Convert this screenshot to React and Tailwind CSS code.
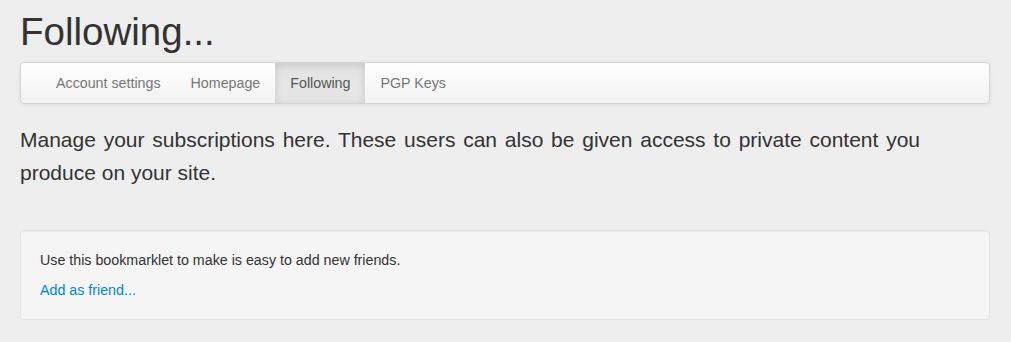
import React from 'react';

const tabs = ['Account settings', 'Homepage', 'Following', 'PGP Keys'];

export default function App() {
  return (
    <div className="min-h-[342px] bg-[#eeeeee] pl-5 pr-[21px] pt-[2px] text-[14.25px] leading-5 text-[#333333] font-['Liberation_Sans',Arial,sans-serif]">
      <h1 className="my-[10px] text-[38.5px] leading-10 font-normal">Following...</h1>

      {/* Tabs bar */}
      <div className="mb-5 min-h-10 rounded border border-[#d4d4d4] bg-gradient-to-b from-white to-[#f2f2f2] px-5 shadow-[0_1px_4px_rgba(0,0,0,0.065)]">
        <ul className="flex">
          {tabs.map((t) => (
            <li key={t}>
              <a
                className={
                  t === 'Following'
                    ? 'block px-[15px] py-[10px] text-[#555555] bg-[#e5e5e5] shadow-[inset_0_3px_8px_rgba(0,0,0,0.125)]'
                    : 'block px-[15px] py-[10px] text-[#777777]'
                }
              >
                {t}
              </a>
            </li>
          ))}
        </ul>
      </div>

      <p className="mb-[41px] max-w-[900px] text-justify text-[21px] leading-[32.5px]">
        Manage your subscriptions here. These users can also be given access to private content you produce on your site.
      </p>

      <div className="rounded border border-[#e3e3e3] bg-[#f5f5f5] p-[19px] shadow-[inset_0_1px_1px_rgba(0,0,0,0.05)]">
        <p className="mb-[10px]">Use this bookmarklet to make is easy to add new friends.</p>
        <p>
          <a className="text-[#0088cc]">Add as friend...</a>
        </p>
      </div>
    </div>
  );
}
